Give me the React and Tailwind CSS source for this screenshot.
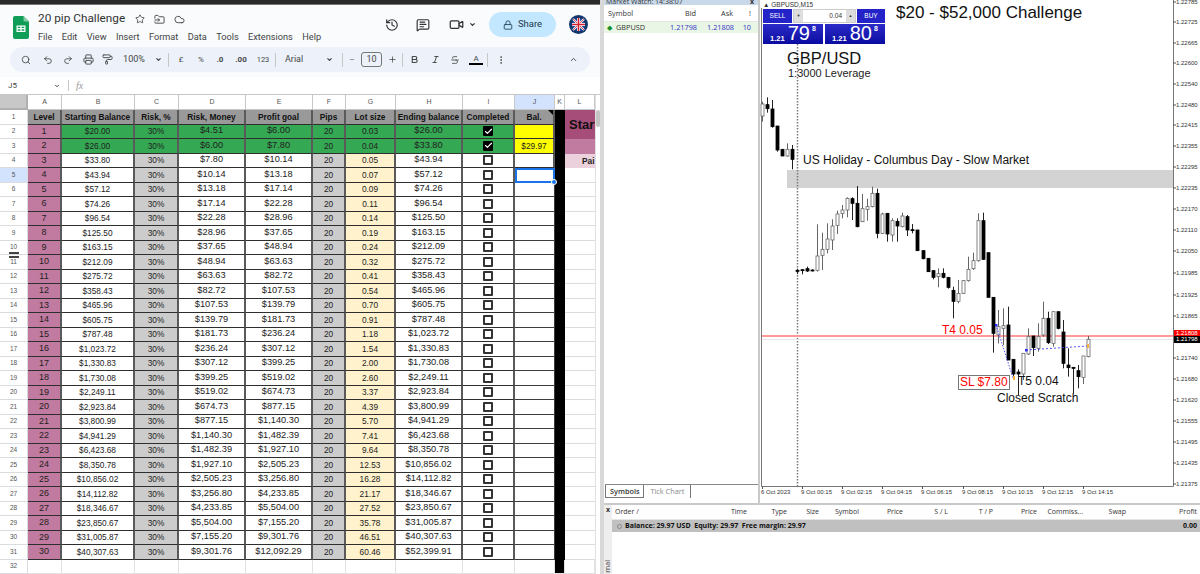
import {
  Search, Undo2, Redo2, Printer, PaintRoller, Star, FolderInput, Cloud, History, MessageSquareText, Video, Lock,
  ChevronDown, ChevronUp, Minus, Plus, Bold, Italic, Strikethrough, EllipsisVertical, Check,
} from "lucide-react";

const rows = [
  ["$20.00", "$4.51", "$6.00", "0.03", "$26.00"],
  ["$26.00", "$6.00", "$7.80", "0.04", "$33.80"],
  ["$33.80", "$7.80", "$10.14", "0.05", "$43.94"],
  ["$43.94", "$10.14", "$13.18", "0.07", "$57.12"],
  ["$57.12", "$13.18", "$17.14", "0.09", "$74.26"],
  ["$74.26", "$17.14", "$22.28", "0.11", "$96.54"],
  ["$96.54", "$22.28", "$28.96", "0.14", "$125.50"],
  ["$125.50", "$28.96", "$37.65", "0.19", "$163.15"],
  ["$163.15", "$37.65", "$48.94", "0.24", "$212.09"],
  ["$212.09", "$48.94", "$63.63", "0.32", "$275.72"],
  ["$275.72", "$63.63", "$82.72", "0.41", "$358.43"],
  ["$358.43", "$82.72", "$107.53", "0.54", "$465.96"],
  ["$465.96", "$107.53", "$139.79", "0.70", "$605.75"],
  ["$605.75", "$139.79", "$181.73", "0.91", "$787.48"],
  ["$787.48", "$181.73", "$236.24", "1.18", "$1,023.72"],
  ["$1,023.72", "$236.24", "$307.12", "1.54", "$1,330.83"],
  ["$1,330.83", "$307.12", "$399.25", "2.00", "$1,730.08"],
  ["$1,730.08", "$399.25", "$519.02", "2.60", "$2,249.11"],
  ["$2,249.11", "$519.02", "$674.73", "3.37", "$2,923.84"],
  ["$2,923.84", "$674.73", "$877.15", "4.39", "$3,800.99"],
  ["$3,800.99", "$877.15", "$1,140.30", "5.70", "$4,941.29"],
  ["$4,941.29", "$1,140.30", "$1,482.39", "7.41", "$6,423.68"],
  ["$6,423.68", "$1,482.39", "$1,927.10", "9.64", "$8,350.78"],
  ["$8,350.78", "$1,927.10", "$2,505.23", "12.53", "$10,856.02"],
  ["$10,856.02", "$2,505.23", "$3,256.80", "16.28", "$14,112.82"],
  ["$14,112.82", "$3,256.80", "$4,233.85", "21.17", "$18,346.67"],
  ["$18,346.67", "$4,233.85", "$5,504.00", "27.52", "$23,850.67"],
  ["$23,850.67", "$5,504.00", "$7,155.20", "35.78", "$31,005.87"],
  ["$31,005.87", "$7,155.20", "$9,301.76", "46.51", "$40,307.63"],
  ["$40,307.63", "$9,301.76", "$12,092.29", "60.46", "$52,399.91"],
];

const gridCols = "grid grid-cols-[28px_34px_73px_44px_67px_67px_33px_50px_67px_52px_40px_10px_30px]";
const cell = "flex items-center justify-center border-r-2 border-b border-r-[#5a5a5a] border-b-[#2e2e2e] overflow-hidden whitespace-nowrap";
const rowHead = "flex items-center justify-center border-r border-b border-[#dadce0] text-[6.500px] text-[#555]";
const letters = ["A", "B", "C", "D", "E", "F", "G", "H", "I", "J", "K", "L"];
const headers = ["Level", "Starting Balance", "Risk, %", "Risk, Money", "Profit goal", "Pips", "Lot size", "Ending balance", "Completed", "Bal."];

function SheetsLogo() {
  return (
    <svg width="16" height="23" viewBox="0 0 16 23">
      <path d="M2 0h8.500L16 5.500V21a2 2 0 0 1-2 2H2a2 2 0 0 1-2-2V2a2 2 0 0 1 2-2z" fill="#0f9d58" />
      <path d="M10.500 0L16 5.500h-4a1.500 1.500 0 0 1-1.500-1.500z" fill="#87cea8" />
      <path d="M3.500 9.500h9v6.500h-9z M4.700 10.700v1.400h2.700v-1.400z M8.600 10.700v1.400h2.700v-1.400z M4.700 13.300v1.500h2.700v-1.500z M8.600 13.300v1.500h2.700v-1.500z" fill="#fff" fillRule="evenodd" />
    </svg>
  );
}

function Flag() {
  return (
    <svg width="19" height="19" viewBox="0 0 19 19">
      <circle cx="9.500" cy="9.500" r="9.500" fill="#12386e" />
      <circle cx="9.500" cy="9.500" r="6.500" fill="#1f4fa0" />
      <path d="M4 4l11 11M15 4L4 15" stroke="#fff" strokeWidth="2" />
      <path d="M4 4l11 11M15 4L4 15" stroke="#d3202f" strokeWidth="0.800" />
      <path d="M9.500 3v13M3 9.500h13" stroke="#fff" strokeWidth="3" />
      <path d="M9.500 3v13M3 9.500h13" stroke="#d3202f" strokeWidth="1.600" />
    </svg>
  );
}

function Sep() {
  return <div className="w-px h-[14px] bg-[#c7c7c7] mx-[6px] shrink-0" />;
}

function Tool({ w, children, className = "" }) {
  return <div className={`flex items-center justify-center shrink-0 text-[#444746] ${w} ${className}`}>{children}</div>;
}

function Checkbox({ on }) {
  if (on) {
    return (
      <div className="w-[10px] h-[10px] rounded-[1px] bg-black flex items-center justify-center">
        <Check size={9} strokeWidth={3} className="text-white" />
      </div>
    );
  }
  return <div className="w-[10px] h-[10px] rounded-[1px] border-2 border-[#333] bg-white" />;
}

function Sheet() {
  return (
    <div className="w-[600px] h-full shrink-0 flex flex-col bg-[#f9fbfd] overflow-hidden">
      <div className="h-[5px] bg-[#2a2a2a] border-b border-[#777] shrink-0" />

      <div className="h-[42px] shrink-0 flex items-start">
        <div className="ml-[13px] mt-[11px]"><SheetsLogo /></div>
        <div className="ml-[9px] mt-[7px] flex flex-col">
          <div className="flex items-center h-[14px] font-['Roboto',sans-serif] text-[11.800px] text-[#333]">
            <span className="w-[97px] whitespace-nowrap">20 pip Challenge</span>
            <Star size={10} className="text-[#444]" />
            <FolderInput size={11} className="ml-[9px] text-[#444]" />
            <Cloud size={11} className="ml-[9px] text-[#444]" />
          </div>
          <div className="flex gap-[9.400px] mt-[4px] font-['Roboto',sans-serif] text-[9.200px] text-[#444]">
            {["File", "Edit", "View", "Insert", "Format", "Data", "Tools", "Extensions", "Help"].map((m) => (
              <span key={m}>{m}</span>
            ))}
          </div>
        </div>
        <div className="ml-auto mr-[12px] mt-[7px] flex items-center text-[#333]">
          <History size={14} />
          <MessageSquareText size={14} className="ml-[17px]" />
          <Video size={15} className="ml-[19px]" />
          <ChevronDown size={7} strokeWidth={4} className="ml-[5px]" />
          <div className="ml-[13px] w-[67px] h-[25px] rounded-full bg-[#c2e7ff] flex items-center justify-center gap-[5px] font-['Roboto',sans-serif] text-[9.500px] text-[#1b3a4b]">
            <Lock size={10} />
            Share
          </div>
          <div className="ml-[13px]"><Flag /></div>
        </div>
      </div>

      <div className="h-[25px] mx-[10px] shrink-0 rounded-full bg-[#edf2fa] flex items-center pl-[6px] font-['Roboto',sans-serif]">
        <Tool w="w-[20px]"><Search size={10} /></Tool>
        <Tool w="w-[24px]"><Undo2 size={10} /></Tool>
        <Tool w="w-[16px]"><Redo2 size={10} /></Tool>
        <Tool w="w-[24px]"><Printer size={11} /></Tool>
        <Tool w="w-[14px]"><PaintRoller size={11} /></Tool>
        <Tool w="w-[40px]" className="text-[9px]">100%</Tool>
        <Tool w="w-[8px]"><ChevronDown size={7} strokeWidth={4} /></Tool>
        <Sep />
        <Tool w="w-[12px]" className="text-[8px]">£</Tool>
        <Tool w="w-[28px]" className="text-[8px]">%</Tool>
        <Tool w="w-[10px]" className="text-[8px] font-bold">.0</Tool>
        <Tool w="w-[32px]" className="text-[8px] font-bold">.00</Tool>
        <Tool w="w-[12px]" className="text-[7.500px]">123</Tool>
        <Sep />
        <Tool w="w-[40px]" className="text-[9px] justify-start pl-[3px]">Arial</Tool>
        <Tool w="w-[14px]"><ChevronDown size={7} strokeWidth={4} /></Tool>
        <Sep />
        <Tool w="w-[6px]"><Minus size={9} /></Tool>
        <div className="w-[21px] h-[15px] ml-[6px] shrink-0 rounded-[3px] border border-[#747775] flex items-center justify-center text-[9px] text-[#444]">10</div>
        <Tool w="w-[20px]"><Plus size={9} /></Tool>
        <div className="w-px h-[14px] bg-[#c7c7c7] shrink-0" />
        <Tool w="w-[22px]"><Bold size={9} strokeWidth={3} /></Tool>
        <Tool w="w-[20px]"><Italic size={9} strokeWidth={2.500} /></Tool>
        <Tool w="w-[20px]"><Strikethrough size={10} /></Tool>
        <Tool w="w-[22px]" className="flex-col text-[8px] leading-[9px]">
          A
          <div className="w-[14px] h-[2px] bg-black" />
        </Tool>
        <div className="w-px h-[14px] bg-[#c7c7c7] shrink-0" />
        <Tool w="w-[26px]"><EllipsisVertical size={10} /></Tool>
        <Tool w="w-[34px]" className="ml-auto"><ChevronUp size={9} strokeWidth={2.500} /></Tool>
      </div>

      <div className="h-[5px] shrink-0" />
      <div className="h-[18px] shrink-0 bg-white border-b border-[#c7c7c7] flex items-center pl-[8px] font-['Roboto',sans-serif] text-[8px] text-[#444]">
        <span className="w-[46px]">J5</span>
        <ChevronDown size={6} strokeWidth={4} />
        <div className="w-px h-[11px] bg-[#c7c7c7] ml-[8px]" />
        <span className="ml-[7px] italic font-['Liberation_Serif',serif] text-[10px] text-[#999]">fx</span>
      </div>

      <div className="relative flex-1 bg-white font-['Liberation_Sans',sans-serif]">
        <div className={`${gridCols} h-[15px]`}>
          <div className="bg-[#c8c8c8] border-r-2 border-b-2 border-[#b0b0b0]" />
          {letters.map((l) => (
            <div key={l} className={`flex items-center justify-center border-r border-b border-[#c7c7c7] text-[7px] text-[#555] ${l === "J" ? "bg-[#d3e3fd]" : ""}`}>{l}</div>
          ))}
        </div>

        <div className={`${gridCols} h-[14.500px]`}>
          <div className={rowHead}>1</div>
          {headers.map((h) => (
            <div key={h} className={`${cell} relative bg-[#999] text-[8.300px] font-bold text-[#111]`}>
              {h}
              {h === "Bal." && <div className="absolute right-0 top-0 border-t-[5px] border-l-[5px] border-t-black border-l-transparent" />}
            </div>
          ))}
          <div className="bg-black" />
          <div className="bg-[#a64d79]" />
        </div>

        {rows.map((r, i) => {
          const done = i < 2;
          const bg = done ? "bg-[#34a853]" : "bg-white";
          return (
            <div key={i} className={`${gridCols} h-[14.500px] text-[#222]`}>
              <div className={`${rowHead} ${i === 3 ? "bg-[#d3e3fd]" : "bg-white"}`}>{i + 2}</div>
              <div className={`${cell} bg-[#c27ba0] text-[9px]`}>{i + 1}</div>
              <div className={`${cell} ${bg} text-[8.300px]`}>{r[0]}</div>
              <div className={`${cell} ${done ? bg : "bg-[#ccc]"} text-[8.300px]`}>30%</div>
              <div className={`${cell} ${bg} text-[9.250px]`}>{r[1]}</div>
              <div className={`${cell} ${bg} text-[9.250px]`}>{r[2]}</div>
              <div className={`${cell} ${done ? bg : "bg-[#ccc]"} text-[8.300px]`}>20</div>
              <div className={`${cell} ${done ? bg : "bg-[#fff2cc]"} text-[8.300px]`}>{r[3]}</div>
              <div className={`${cell} ${bg} text-[9.250px]`}>{r[4]}</div>
              <div className={`${cell} ${bg}`}><Checkbox on={done} /></div>
              {i === 0 && <div className={`${cell} bg-[#ffff00]`} />}
              {i === 1 && <div className={`${cell} bg-[#ffff00] text-[8.300px]`}>$29.97</div>}
              {i === 2 && <div className={`${cell} bg-white`} />}
              {i === 3 && (
                <div className="relative border-2 border-[#1a73e8]">
                  <div className="absolute -right-[4px] -bottom-[4px] w-[6px] h-[6px] rounded-full bg-[#1a73e8] border border-white" />
                </div>
              )}
              {i > 3 && <div className="bg-white border-r border-b border-[#3c3c3c]" />}
              <div className="bg-black" />
              {i === 0 && <div className="bg-[#a64d79]" />}
              {i === 1 && <div className="bg-[#c27ba0]" />}
              {i === 2 && <div className="bg-[#ead1dc] text-[8.300px] font-bold pl-[17px] flex items-center overflow-hidden whitespace-nowrap">Pai</div>}
              {i > 2 && <div className="border-b border-[#dadce0]" />}
            </div>
          );
        })}

        <div className={`${gridCols} h-[14.500px]`}>
          <div className={`${rowHead} bg-white`}>32</div>
          {letters.map((l) => (
            <div key={l} className={`border-r border-b border-[#e2e3e3] ${l === "K" ? "bg-black" : ""}`} />
          ))}
        </div>

        {/* merged title cell */}
        <div className="absolute left-[565px] top-[15px] w-[30px] h-[29px] bg-[#a64d79] text-[13px] font-bold text-[#111] pl-[4px] pt-[5px] overflow-hidden whitespace-nowrap">Start</div>

        {/* resize marker between rows 10 and 11 */}
        <div className="absolute left-[9px] top-[157px] w-[10px] h-[6px] border-y-2 border-[#444]" />

        {/* sheet scrollbar */}
        <div className="absolute left-[595px] top-0 bottom-0 w-[5px] bg-white border-l border-[#e0e0e0]">
          <div className="mt-[15px] h-[17px] bg-[#c4c4c4] rounded-sm" />
        </div>
      </div>
    </div>
  );
}

const axis = [
  ["1.22785", 2], ["1.22725", 22], ["1.22665", 43], ["1.22600", 63], ["1.22540", 84], ["1.22480", 105], ["1.22415", 125],
  ["1.22355", 146], ["1.22295", 167], ["1.22235", 188], ["1.22170", 209], ["1.22110", 230], ["1.22050", 251], ["1.21985", 273],
  ["1.21925", 295], ["1.21865", 316], ["1.21740", 358], ["1.21680", 379], ["1.21620", 400], ["1.21555", 421], ["1.21495", 442],
  ["1.21435", 463], ["1.21375", 484],
];

const times = [
  ["6 Oct 2023", 1], ["9 Oct 00:15", 41], ["9 Oct 02:15", 81], ["9 Oct 04:15", 121], ["9 Oct 06:15", 161],
  ["9 Oct 08:15", 202], ["9 Oct 10:15", 242], ["9 Oct 12:15", 282], ["9 Oct 14:15", 322],
];

// measured off the chart: x, high, body top, body bottom, low, black?
const upper = [
  [5, 35, 42, 78, 95, 0], [20, 22, 44, 56, 68, 1], [35, 30, 57, 110, 113, 1], [50, 108, 108, 180, 185, 1],
  [65, 178, 178, 198, 198, 1], [80, 160, 178, 198, 200, 0], [95, 165, 178, 208, 238, 1],
  [110, 536, 541, 543, 552, 1], [125, 538, 539, 541, 553, 1], [140, 530, 536, 543, 546, 1], [155, 538, 540, 542, 544, 1],
  [170, 403, 498, 541, 545, 0], [185, 428, 478, 496, 540, 0], [200, 400, 447, 478, 490, 0], [215, 388, 408, 450, 480, 0],
  [230, 362, 372, 406, 432, 0], [245, 345, 360, 370, 385, 0], [260, 322, 325, 360, 382, 0], [275, 322, 326, 340, 390, 1],
  [291, 288, 340, 410, 412, 1], [306, 312, 356, 395, 396, 0], [321, 326, 350, 358, 392, 0], [336, 290, 310, 350, 352, 0],
  [351, 296, 310, 430, 445, 1], [367, 368, 372, 430, 432, 0], [382, 370, 370, 432, 455, 1], [397, 385, 392, 435, 455, 0],
  [412, 385, 394, 408, 455, 1], [427, 368, 378, 410, 412, 0], [442, 375, 380, 420, 438, 1], [457, 402, 419, 422, 430, 1],
  [472, 420, 420, 482, 482, 1], [488, 480, 482, 506, 508, 1], [503, 505, 505, 545, 546, 1], [518, 540, 542, 562, 568, 1],
  [533, 535, 551, 560, 592, 0], [548, 535, 550, 562, 565, 1], [563, 562, 562, 592, 596, 1], [578, 590, 601, 634, 685, 1],
  [593, 570, 610, 634, 640, 0], [608, 570, 572, 610, 612, 0], [623, 500, 538, 572, 575, 0], [639, 488, 512, 536, 540, 0],
  [654, 370, 392, 512, 515, 0], [669, 368, 392, 508, 510, 1], [684, 488, 488, 622, 622, 1],
];
const lower = [
  [279, 52, 52, 160, 218, 1], [294, 90, 140, 165, 190, 0], [309, 85, 137, 145, 195, 0], [324, 80, 135, 240, 240, 1],
  [339, 238, 238, 282, 290, 1], [354, 268, 276, 282, 345, 1], [369, 220, 220, 282, 300, 0], [384, 145, 170, 222, 225, 0],
  [399, 168, 168, 203, 228, 1], [414, 130, 170, 205, 215, 0], [429, 65, 115, 165, 170, 0], [444, 95, 115, 188, 192, 1],
  [459, 95, 95, 190, 200, 0], [474, 95, 95, 145, 148, 1], [490, 120, 156, 250, 265, 1], [505, 205, 255, 263, 290, 1],
  [520, 262, 262, 265, 340, 1], [535, 255, 272, 290, 325, 1], [550, 228, 228, 292, 312, 0], [565, 168, 178, 230, 232, 0],
];
const candles = [
  ...upper.map(([x, h, t, b, l, k]) => [x / 3, 90 + h / 3, 90 + t / 3, 90 + b / 3, 90 + l / 3, k]),
  ...lower.map(([x, h, t, b, l, k]) => [140 + x / 3, 280 + h / 3, 280 + t / 3, 280 + b / 3, 280 + l / 3, k]),
];

function Candle({ c }) {
  const [x, hi, top, bottom, lo, black] = c;
  const px = Math.round(x) + 0.5;
  return (
    <g>
      <line x1={px} x2={px} y1={hi} y2={lo} stroke={black ? "#222" : "#666"} strokeWidth="1" />
      <rect x={px - 1.5} y={top} width="3" height={Math.max(bottom - top, 1)} fill={black ? "#000" : "#fff"} stroke={black ? "#000" : "#666"} strokeWidth="0.800" />
    </g>
  );
}

function Chart() {
  return (
    <div className="relative flex-1 bg-white overflow-hidden font-['Liberation_Sans',sans-serif]">
      <svg width="440" height="503" viewBox="0 0 440 503" className="absolute inset-0">
        <rect x="27" y="170" width="386" height="18" fill="#d3d3d3" />
        <line x1="37.500" x2="37.500" y1="44" y2="486" stroke="#777" strokeWidth="1.500" strokeDasharray="1.500 1.500" />
        <line x1="2" x2="413" y1="336" y2="336" stroke="#ff9a9a" strokeWidth="2" />
        <line x1="2" x2="413" y1="339.500" y2="339.500" stroke="#e6e6e6" strokeWidth="1" />
        <path d="M1.500 8V486.500H413.500V0" fill="none" stroke="#777" strokeWidth="1" />
        {axis.map(([l, y]) => (
          <line key={l} x1="413" x2="416" y1={y} y2={y} stroke="#555" strokeWidth="1" />
        ))}
        {times.map(([l, x]) => (
          <line key={l} x1={x + 1.500} x2={x + 1.500} y1="486" y2="489" stroke="#555" strokeWidth="1" />
        ))}
        {candles.map((c, i) => <Candle key={i} c={c} />)}
        <path d="M236 325L253 378" stroke="#2b2bff" strokeWidth="0.800" strokeDasharray="1.500 1.500" fill="none" />
        <path d="M266 350L328 346" stroke="#2b2bff" strokeWidth="0.800" strokeDasharray="2 2" fill="none" />
        <rect x="235" y="324" width="2.500" height="2.500" fill="#2b2bff" />
        <rect x="265" y="349" width="2.500" height="2.500" fill="#2b2bff" />
        <rect x="253" y="376" width="2" height="4" fill="#f5b342" />
        <rect x="327" y="344" width="2" height="4" fill="#f5b342" />
      </svg>

      <div className="absolute left-[3px] top-0 text-[6.500px] leading-[9px] text-[#333]">▲ GBPUSD,M15</div>

      {/* one click trading panel */}
      <div className="absolute left-[3px] top-[9px] w-[122px] flex flex-col gap-px text-white">
        <div className="flex h-[14px] gap-px">
          <div className="w-[29px] bg-[#2323c8] flex items-center justify-center text-[6.500px]">SELL</div>
          <div className="flex-1 flex items-center bg-white border border-[#ccc] text-[#333] text-[6.500px]">
            <span className="w-[9px] h-full bg-[#ddd] flex items-center justify-center text-[4px]">▼</span>
            <span className="flex-1 text-right pr-[4px]">0.04</span>
            <span className="w-[9px] h-full bg-[#ddd] flex items-center justify-center text-[4px]">▲</span>
          </div>
          <div className="w-[28px] bg-[#2323c8] flex items-center justify-center text-[6.500px]">BUY</div>
        </div>
        <div className="flex h-[20px] gap-[2px]">
          {[["79", "w-[60px]"], ["80", "flex-1"]].map(([p, w]) => (
            <div key={p} className={`${w} bg-gradient-to-b from-[#2a2ac8] to-[#0a0aa0] flex items-end justify-center leading-none pb-[1px]`}>
              <span className="text-[7.500px] font-bold mb-[1px]">1.21</span>
              <span className="text-[20px] ml-[3px] leading-[20px]">{p}</span>
              <span className="text-[7px] font-bold self-start ml-[2px] mt-[1px]">8</span>
            </div>
          ))}
        </div>
      </div>

      <div className="absolute left-[136px] top-[2px] text-[17px] leading-[22px] text-[#111] whitespace-nowrap">$20 - $52,000 Challenge</div>
      <div className="absolute left-[27px] top-[49px] text-[16.500px] leading-[19px] text-[#111]">GBP/USD</div>
      <div className="absolute left-[28px] top-[67px] text-[11px] leading-[13px] text-[#222] whitespace-nowrap">1:3000 Leverage</div>
      <div className="absolute left-[43px] top-[153px] text-[12px] leading-[15px] text-[#111] whitespace-nowrap">US Holiday - Columbus Day - Slow Market</div>
      <div className="absolute left-[182px] top-[323px] text-[12px] leading-[15px] text-[#f00] whitespace-nowrap">T4 0.05</div>
      <div className="absolute left-[198px] top-[375px] border border-[#777] px-[1px] text-[12px] leading-[13px] text-[#f00] whitespace-nowrap">SL $7.80</div>
      <div className="absolute left-[258px] top-[374px] text-[12px] leading-[15px] text-[#111] whitespace-nowrap">T5 0.04</div>
      <div className="absolute left-[237px] top-[391px] text-[12px] leading-[15px] text-[#111] whitespace-nowrap">Closed Scratch</div>

      {axis.map(([l, y]) => (
        <div key={l} className="absolute left-[416px] text-[6px] leading-[8px] text-[#333]" style={{ top: y - 4 }}>{l}</div>
      ))}
      <div className="absolute left-[414px] top-[330px] w-[26px] h-[6px] bg-[#f00] text-white text-[6px] leading-[6px] pl-[2px] overflow-hidden">1.21808</div>
      <div className="absolute left-[414px] top-[336px] w-[26px] h-[7px] bg-black text-white text-[6px] leading-[7px] pl-[2px]">1.21798</div>

      {times.map(([l, x]) => (
        <div key={l} className="absolute top-[488px] text-[6px] leading-[8px] text-[#333] whitespace-nowrap" style={{ left: x }}>{l}</div>
      ))}
    </div>
  );
}

function MarketWatch() {
  return (
    <div className="w-[156px] shrink-0 flex flex-col bg-white border-r-2 border-[#c9c9c9] font-['Open_Sans',sans-serif] text-[7.300px] text-[#333]">
      <div className="h-[5px] shrink-0 bg-[#c9d9ea] overflow-hidden flex justify-between px-[2px] leading-[3px] text-[7px]">
        <span>Market Watch: 14:38:07</span>
        <span className="font-bold mr-[2px]">x</span>
      </div>
      <div className="h-[17px] shrink-0 grid grid-cols-[57px_38px_37px_18px] items-center border-b border-[#e5e5e5]">
        <span className="pl-[4px]">Symbol</span>
        <span className="text-right pr-[3px]">Bid</span>
        <span className="text-right pr-[3px]">Ask</span>
        <span className="text-right pr-[3px]">!</span>
      </div>
      <div className="h-[11px] shrink-0 grid grid-cols-[57px_38px_37px_18px] items-center bg-[#e9f6e6] text-[#3535c8]">
        <span className="pl-[3px] flex items-center gap-[4px] text-[#333]">
          <span className="text-[#15922a] text-[7px] leading-none">◆</span>
          GBPUSD
        </span>
        <span className="text-right pr-[2px]">1.21798</span>
        <span className="text-right pr-[2px]">1.21808</span>
        <span className="text-right pr-[3px]">10</span>
      </div>
      <div className="flex-1" />
      <div className="h-[18px] shrink-0 flex items-start border-t border-[#888] ml-[1px] mb-[1px]">
        <div className="h-[13px] px-[4px] flex items-center bg-white border-x border-b border-[#777] font-semibold">Symbols</div>
        <div className="h-[13px] px-[6px] flex items-center text-[#888] border-r border-[#777]">Tick Chart</div>
      </div>
    </div>
  );
}

const termCols = "grid grid-cols-[58px_80px_40px_32px_40px_44px_45px_45px_44px_46px_44px_70px]";

function Terminal() {
  const cols = [
    ["Order   /", "text-left pl-[3px]"], ["Time", "text-right pr-[3px]"], ["Type", "text-right pr-[3px]"], ["Size", "text-right pr-[3px]"],
    ["Symbol", "text-right pr-[3px]"], ["Price", "text-right pr-[3px]"], ["S / L", "text-right pr-[3px]"], ["T / P", "text-right pr-[3px]"],
    ["Price", "text-right pr-[3px]"], ["Commiss...", "text-right pr-[3px]"], ["Swap", "text-right pr-[4px]"], ["Profit", "text-right pr-[3px]"],
  ];
  return (
    <div className="flex-1 flex border-t-2 border-[#c9c9c9] font-['Open_Sans',sans-serif] text-[7px] text-[#333]">
      <div className="w-[8px] shrink-0 bg-[#eeeeee] flex flex-col justify-between items-center">
        <span className="font-bold leading-[10px]">x</span>
        <span className="[writing-mode:vertical-rl] rotate-180 leading-[8px] mb-[1px]">rnal</span>
      </div>
      <div className="flex-1 flex flex-col bg-white">
        <div className={`${termCols} h-[15px] shrink-0 items-center border-b border-[#e5e5e5]`}>
          {cols.map(([l, c], i) => <span key={i} className={`${c} whitespace-nowrap`}>{l}</span>)}
        </div>
        <div className="h-[12px] shrink-0 bg-[#c0c0c0] flex items-center justify-between pl-[5px] pr-[3px] font-bold text-[#111]">
          <span className="flex items-center gap-[3px] whitespace-nowrap">
            <span className="w-[5px] h-[5px] rounded-full border border-[#888]" />
            Balance: 29.97 USD&nbsp; Equity: 29.97&nbsp; Free margin: 29.97
          </span>
          <span>0.00</span>
        </div>
      </div>
    </div>
  );
}

export default function App() {
  return (
    <div className="w-[1200px] h-[574px] flex overflow-hidden bg-white">
      <Sheet />
      <div className="w-[4px] shrink-0 bg-[#d8d8d8]" />
      <div className="flex-1 flex flex-col min-w-0">
        <div className="h-[503px] shrink-0 flex">
          <MarketWatch />
          <Chart />
        </div>
        <Terminal />
      </div>
    </div>
  );
}
